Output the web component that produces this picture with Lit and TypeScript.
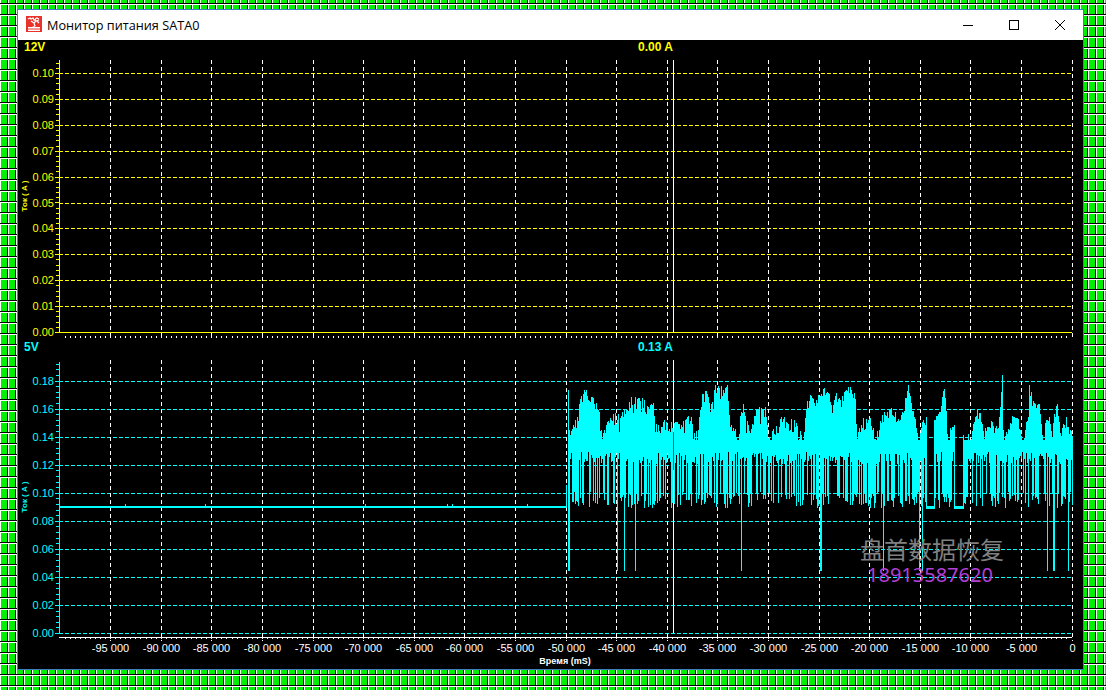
import { LitElement, html, svg, css } from 'lit';
import { customElement, property } from 'lit/decorators.js';

// page x of a time value, axis runs -100000..0 ms
const xOf = (t: number) => 60 + ((t + 100000) / 100000) * 1012;

const majorX: number[] = [];
for (let t = -95000; t <= 0; t += 5000) majorX.push(Math.floor(xOf(t)) + 0.5);

const formatTime = (t: number) =>
  t === 0 ? '0' : `-${Math.floor(-t / 1000)} 000`;

// upper outline of the noisy part of the 5V trace, read off the picture
const envelope: [number, number][] = [
  [570, 433], [575, 420], [578, 403], [585, 387], [595, 400], [599, 410], [600, 430], [605, 427],
  [610, 412], [620, 413], [625, 407], [630, 397], [640, 395], [647, 403], [653, 403], [655, 423],
  [663, 420], [672, 420], [680, 423], [690, 413], [697, 433], [702, 392], [705, 385], [710, 405],
  [715, 385], [727, 383], [730, 420], [737, 433], [742, 400], [750, 433], [755, 407], [765, 407],
  [768, 433], [775, 427], [783, 413], [795, 420], [803, 433], [808, 393], [815, 400], [822, 387],
  [827, 387], [832, 403], [835, 390], [840, 400], [845, 390], [852, 383], [855, 398], [857, 432],
  [862, 417], [870, 418], [875, 433], [882, 412], [892, 408], [900, 418], [908, 383], [913, 410],
  [918, 433], [925, 413], [935, 417], [940, 410], [944, 383], [948, 433], [952, 420], [963, 435],
  [970, 433], [975, 410], [980, 405], [983, 430], [992, 420], [998, 427], [1002, 373], [1003, 430],
  [1010, 417], [1017, 412], [1023, 433], [1028, 413], [1029, 383], [1035, 403], [1038, 392],
  [1042, 433], [1048, 412], [1052, 433], [1055, 403], [1057, 397], [1060, 433], [1067, 413], [1072, 433],
];

const deepSpikes = new Set([617, 624, 635, 741, 820, 821, 883, 919, 922, 1047, 1053, 1054, 1068]);
const flatRuns = [[927, 933], [955, 962]];

function envelopeAt(x: number) {
  for (let i = 1; i < envelope.length; i++) {
    const [x0, y0] = envelope[i - 1];
    const [x1, y1] = envelope[i];
    if (x <= x1) return y0 + ((x - x0) / (x1 - x0)) * (y1 - y0);
  }
  return 433;
}

function buildTrace() {
  let seed = 4711;
  const rnd = () => {
    seed = (seed * 1103515245 + 12345) & 0x7fffffff;
    return seed / 0x7fffffff;
  };
  // idle part: flat at 0.09 A with a few tiny blips
  let d = 'M59 507H567 M59 506.5H567';
  for (const x of [125, 205, 365, 447, 452, 527]) d += `M${x}.5 507V504`;
  d += 'M566.5 507V485 M568.5 390V571 M569.5 430V571';
  for (let x = 570; x <= 1072; x++) {
    if (flatRuns.some(([a, b]) => x >= a && x <= b)) {
      d += `M${x}.5 506V509`;
      continue;
    }
    const nearFlat = flatRuns.some(([a, b]) => x === a - 1 || x === b + 1);
    const top = Math.min(envelopeAt(x) + rnd() * rnd() * 20, 440);
    const r = rnd();
    let bottom = r < 0.55 ? 492 + rnd() * 16 : 452 + rnd() * 12;
    if (nearFlat) bottom = 509;
    if (deepSpikes.has(x)) bottom = 571;
    d += `M${x}.5 ${top.toFixed(0)}V${bottom.toFixed(0)}`;
  }
  return d;
}

const tracePath = buildTrace();

interface Channel {
  label: string;
  current: string;
  color: string;
  top: number;
  height: number;
  axisTop: number;
  zero: number;
  pitch: number;
  step: number;
  count: number;
}

@customElement('chart-panel')
export class ChartPanel extends LitElement {
  static styles = css`
    :host {
      display: block;
      background: #000;
    }
    .head {
      box-sizing: border-box;
      display: grid;
      grid-template-columns: 614px auto;
      height: 20px;
      align-items: center;
      padding: 0 0 6px 6px;
      font: bold 12px 'Liberation Sans', Arial, sans-serif;
    }
    svg {
      display: block;
    }
    .tick {
      font: 11px 'Liberation Sans', Arial, sans-serif;
    }
    .ylabel {
      font: bold 8px 'Liberation Sans', Arial, sans-serif;
    }
    .xlabel {
      font: bold 9px 'Liberation Sans', Arial, sans-serif;
    }
  `;

  @property({ attribute: false }) channel!: Channel;
  @property({ type: Boolean }) timeAxis = false;

  private yTicks() {
    const c = this.channel;
    let minor = '';
    const minorPitch = c.pitch / 5;
    for (let y = c.zero, i = 0; y >= c.axisTop; y -= minorPitch, i++) {
      const yy = Math.round(y) + 0.5;
      minor += `M${i % 5 === 0 ? 55 : 56} ${yy}H59`;
    }
    return minor;
  }

  private xMinor() {
    let d = '';
    for (let t = -99500; t < 0; t += 500) {
      d += `M${Math.floor(xOf(t)) + 0.5} 0v2`;
    }
    return d;
  }

  render() {
    const c = this.channel;
    const rows = Array.from({ length: c.count + 1 }, (_, i) => i);
    const axisY = this.timeAxis ? 637 : 336;
    const gridBottom = this.timeAxis ? 641 : 340;
    return html`
      <div class="head" style="color:${c.color}">
        <span>${c.label}</span><span>${c.current}</span>
      </div>
      <svg width="1065" height=${c.height} viewBox="18 ${c.top} 1065 ${c.height}">
        ${rows.map((i) => {
          const y = Math.round(c.zero - i * c.pitch) + 0.5;
          const solid = i === 0 && !this.timeAxis;
          return svg`
            <path d="M59 ${y}H1072" stroke=${c.color} fill="none"
              stroke-dasharray=${solid ? 'none' : '4 2'}></path>
            <text class="tick" x="54" y=${y + 3.5} text-anchor="end" fill=${c.color}>${(i * c.step).toFixed(2)}</text>
          `;
        })}
        ${majorX.map(
          (x) => svg`<path d="M${x} ${c.top}V${gridBottom}" stroke="#fff" stroke-dasharray="4 3" fill="none"></path>`
        )}
        <path d=${this.yTicks()} stroke=${c.color} fill="none"></path>
        <path d="M59.5 ${c.axisTop}V${Math.round(c.zero) + 1}" stroke=${c.color} fill="none"></path>
        <g transform="translate(0 ${axisY})">
          <path d=${this.xMinor()} stroke="#fff" fill="none"></path>
        </g>
        <text class="ylabel" transform="translate(26.5 ${c.zero - 136}) rotate(-90)"
          text-anchor="middle" fill=${c.color}>Ток ( A )</text>
        ${this.timeAxis
          ? svg`
            <path d=${tracePath} stroke=${c.color} fill="none" shape-rendering="crispEdges"></path>
            <path d="M59 637.5H1072" stroke="#fff" fill="none"></path>
            ${majorX.map(
              (x, i) => svg`<text class="tick" x=${x} y="652" text-anchor="middle" fill="#fff">${formatTime(-95000 + i * 5000)}</text>`
            )}
            <text class="xlabel" x="565" y="664" text-anchor="middle" fill="#fff">Время (mS)</text>
            <path d="M673.5 360V633" stroke="#fff" fill="none"></path>
            <path d="M673.5 432V470" stroke="#c02020" fill="none"></path>
          `
          : svg`<path d="M673.5 60V333" stroke="#fff" fill="none"></path>`}
      </svg>
    `;
  }
}

const channels: Channel[] = [
  { label: '12V', current: '0.00 A', color: '#ffff00', top: 60, height: 280, axisTop: 60, zero: 332, pitch: 25.9, step: 0.01, count: 10 },
  { label: '5V', current: '0.13 A', color: '#00ffff', top: 360, height: 309, axisTop: 362, zero: 633, pitch: 28.05, step: 0.02, count: 9 },
];

@customElement('app-root')
export class AppRoot extends LitElement {
  static styles = css`
    :host {
      display: block;
      box-sizing: border-box;
      width: 1106px;
      height: 690px;
      padding: 9px 22px 20px 17px;
      background-color: #00f000;
      background-image:
        linear-gradient(transparent 0 9px, #000 9px 10px, #fff 10px 11px),
        linear-gradient(90deg, transparent 0 6px, #000 6px 7px, #fff 7px 8px);
      background-size: 8px 11px;
      background-position: 1px 5px;
      overflow: hidden;
    }
    .window {
      position: relative;
      box-sizing: border-box;
      width: 1067px;
      height: 661px;
      border: 1px solid #3a7fc0;
      background: #000;
    }
    .titlebar {
      display: flex;
      align-items: center;
      height: 30px;
      background: #fff;
      padding-left: 8px;
    }
    .logo {
      display: block;
      margin: -2px 5px 0 0;
    }
    .title {
      flex: 1;
      font: 12.7px 'Open Sans', 'Noto Sans', sans-serif;
      color: #000;
    }
    .ctl {
      display: flex;
      align-items: center;
      justify-content: center;
      width: 46px;
      height: 30px;
      margin-top: -1px;
    }
    .stamp {
      position: absolute;
      left: 842px;
      top: 524px;
      font-family: 'Noto Sans CJK SC', sans-serif;
      white-space: nowrap;
    }
    .stamp .name {
      font-size: 24px;
      line-height: 30px;
      color: #808080;
    }
    .stamp .phone {
      font-size: 20px;
      line-height: 22px;
      padding-left: 7px;
      color: #b23fd6;
      font-family: 'Noto Sans', sans-serif;
    }
  `;

  render() {
    return html`
      <div class="window">
        <div class="titlebar">
          <svg class="logo" width="16" height="16" viewBox="0 0 16 16">
            <rect width="16" height="16" fill="#e8322a"></rect>
            <path d="M2 3l2-1 1 1 2-1 1 2 2 0M9 3l2-1 2 1M5 5l3 2 2-2 3-1M8 7l1 3M11 5l2 2" stroke="#fff" stroke-width="1.3" fill="none"></path>
            <path d="M2 11h4l2-1 2 1h4v1.4H2zM2 13.6h12V15H2z" fill="#fff"></path>
          </svg>
          <span class="title">Монитор питания SATA0</span>
          <div class="ctl">
            <svg width="10" height="10" viewBox="0 0 10 10"><path d="M0 5.5H10" stroke="#000" fill="none"></path></svg>
          </div>
          <div class="ctl">
            <svg width="10" height="10" viewBox="0 0 10 10"><rect x=".5" y=".5" width="9" height="9" stroke="#000" fill="none"></rect></svg>
          </div>
          <div class="ctl">
            <svg width="10" height="10" viewBox="0 0 10 10"><path d="M0 0L10 10M10 0L0 10" stroke="#000" fill="none"></path></svg>
          </div>
        </div>
        <chart-panel .channel=${channels[0]}></chart-panel>
        <chart-panel .channel=${channels[1]} timeAxis></chart-panel>
        <div class="stamp">
          <div class="name">盘首数据恢复</div>
          <div class="phone">18913587620</div>
        </div>
      </div>
    `;
  }
}
